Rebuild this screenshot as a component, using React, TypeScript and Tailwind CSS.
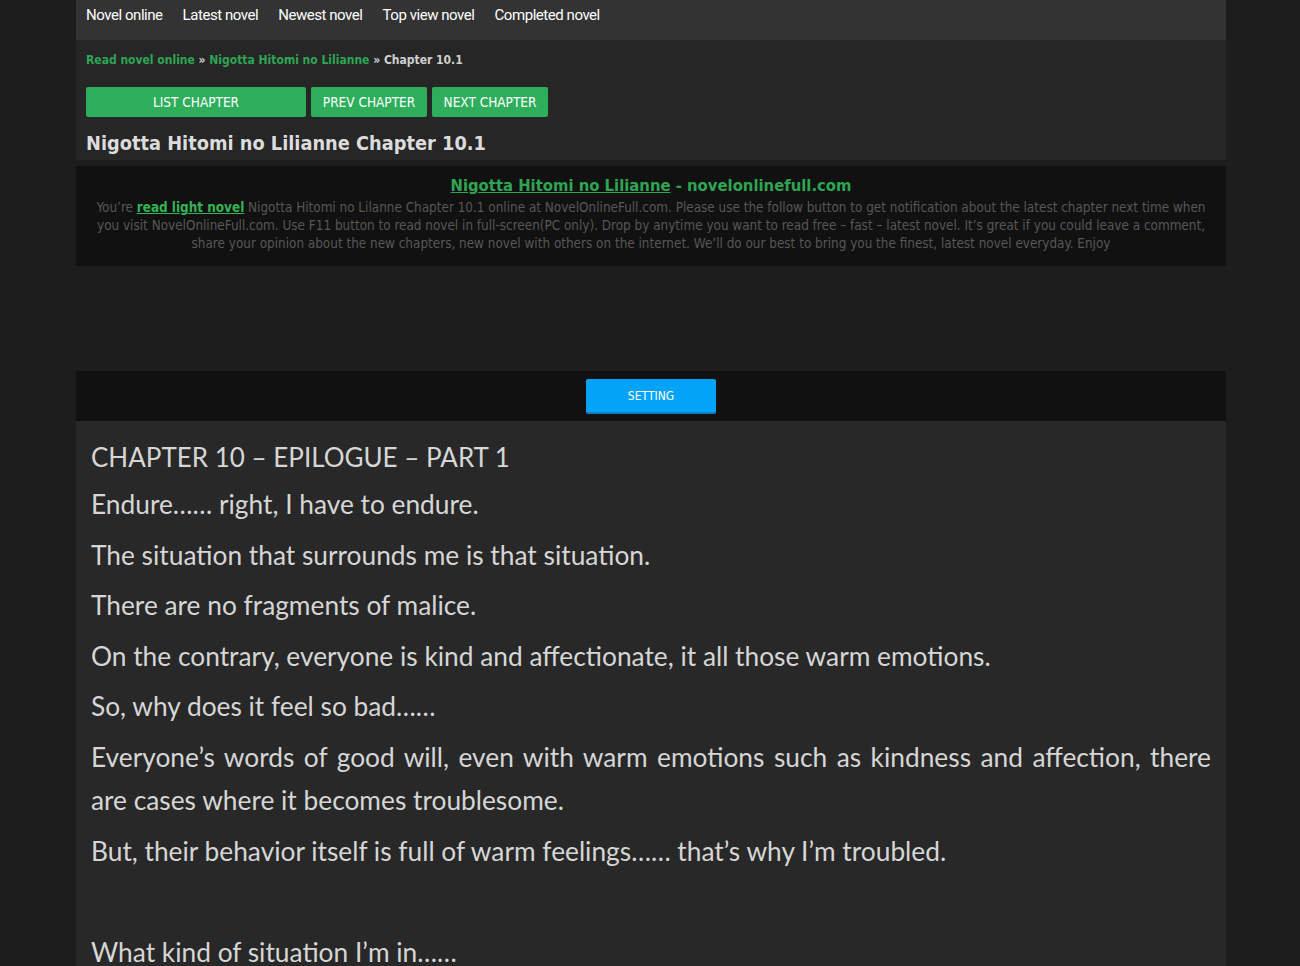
const navItems = ["Novel online", "Latest novel", "Newest novel", "Top view novel", "Completed novel"];

const paragraphs = [
  "Endure…… right, I have to endure.",
  "The situation that surrounds me is that situation.",
  "There are no fragments of malice.",
  "On the contrary, everyone is kind and affectionate, it all those warm emotions.",
  "So, why does it feel so bad……",
  "Everyone’s words of good will, even with warm emotions such as kindness and affection, there are cases where it becomes troublesome.",
  "But, their behavior itself is full of warm feelings…… that’s why I’m troubled.",
  "\u00a0",
  "What kind of situation I’m in……",
];

export default function App() {
  return (
    <div className="min-h-[966px] bg-[#1d1d1d]">
      <div className="ml-[76px] w-[1150px]">
        {/* top nav */}
        <nav className="flex h-[40px] items-start bg-[#333333] font-['Roboto',sans-serif] text-[15px] tracking-[-0.45px] text-white">
          {navItems.map((item) => (
            <a key={item} href="#" className="px-[10px] leading-[31px]">
              {item}
            </a>
          ))}
        </nav>

        {/* header */}
        <div className="bg-[#262626] px-[10px]">
          <div className="pt-[12px] font-['DejaVu_Sans_Condensed','DejaVu_Sans',sans-serif] text-[12px] font-bold leading-[16px]">
            <a href="#" className="text-[#2ea552]">Read novel online</a>
            <span className="text-[#d0d0d0]"> » </span>
            <a href="#" className="text-[#2ea552]">Nigotta Hitomi no Lilianne</a>
            <span className="text-[#d0d0d0]"> » Chapter 10.1</span>
          </div>
          <div className="mt-[19px] flex gap-[5px] font-['DejaVu_Sans_Condensed','DejaVu_Sans',sans-serif] text-[13.5px] text-white">
            <a href="#" className="flex h-[30px] w-[220px] items-center justify-center rounded-[2px] bg-[#2eae5b]">LIST CHAPTER</a>
            <a href="#" className="flex h-[30px] w-[116px] items-center justify-center rounded-[2px] bg-[#2eae5b]">PREV CHAPTER</a>
            <a href="#" className="flex h-[30px] w-[116px] items-center justify-center rounded-[2px] bg-[#2eae5b]">NEXT CHAPTER</a>
          </div>
          <h1 className="mt-[11px] font-['DejaVu_Sans_Condensed','DejaVu_Sans',sans-serif] text-[19.8px] font-bold leading-[32px] text-[#dcdcdc]">
            Nigotta Hitomi no Lilianne Chapter 10.1
          </h1>
        </div>

        {/* description */}
        <div className="mt-[6px] h-[100px] bg-[#111111] px-[12px] pt-[9px] text-center font-['DejaVu_Sans_Condensed','DejaVu_Sans',sans-serif]">
          <div className="text-[16.5px] font-bold leading-[22px] text-[#2ea552]">
            <a href="#" className="underline">Nigotta Hitomi no Lilianne</a> - novelonlinefull.com
          </div>
          <p className="mt-[2px] text-[13.4px] leading-[18px] text-[#575757]">
            You’re <a href="#" className="font-bold text-[#35b457] underline">read light novel</a> Nigotta Hitomi no Lilanne Chapter 10.1 online at NovelOnlineFull.com. Please use the follow button to get notification about the latest chapter next time when you visit NovelOnlineFull.com. Use F11 button to read novel in full-screen(PC only). Drop by anytime you want to read free – fast – latest novel. It’s great if you could leave a comment, share your opinion about the new chapters, new novel with others on the internet. We’ll do our best to bring you the finest, latest novel everyday. Enjoy
          </p>
        </div>

        {/* ad space */}
        <div className="h-[105px]" />

        {/* setting bar */}
        <div className="flex h-[50px] justify-center bg-[#111111] pt-[8px]">
          <button className="h-[35px] w-[130px] rounded-[2px] border-b-2 border-[#0b7fc4] bg-[#03a4f7] font-['DejaVu_Sans_Condensed','DejaVu_Sans',sans-serif] text-[12px] text-white">
            SETTING
          </button>
        </div>

        {/* chapter content */}
        <div className="bg-[#282828] px-[15px] pt-[18px] pb-[20px] font-['Lato',sans-serif] text-[#d6d6d6]">
          <h2 className="text-[26px] leading-[36px]">CHAPTER 10 – EPILOGUE – PART 1</h2>
          <div className="mt-[8px] text-justify text-[26.3px] leading-[43px]">
            {paragraphs.map((p, i) => (
              <p key={i} className="mb-[7.6px]">
                {p}
              </p>
            ))}
          </div>
        </div>
      </div>
    </div>
  );
}
